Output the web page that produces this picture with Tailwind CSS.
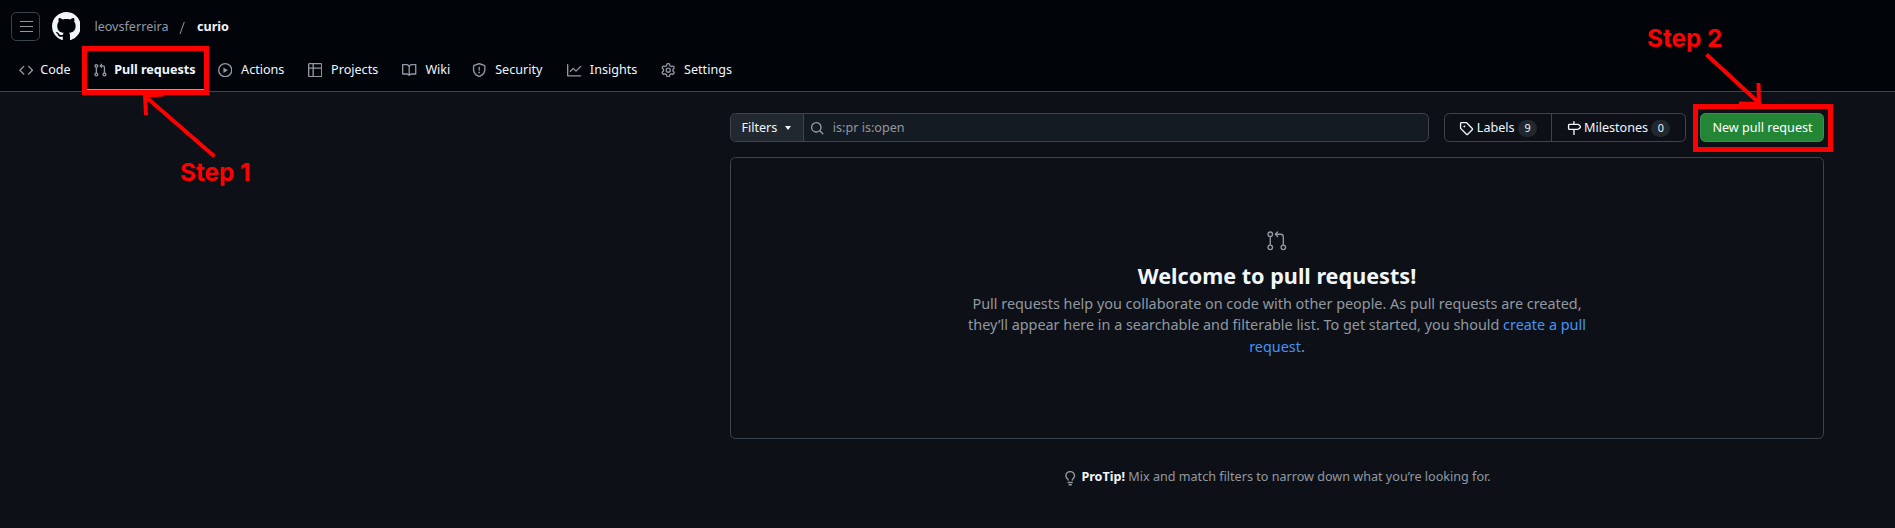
<!DOCTYPE html>
<html lang="en">
<head>
<meta charset="utf-8">
<title>Pull requests · leovsferreira/curio</title>
<script src="https://cdn.jsdelivr.net/npm/@tailwindcss/browser@4"></script>
</head>
<body class="relative h-[528px] w-[1895px] overflow-hidden bg-[#0d1117] font-['Noto_Sans',sans-serif] text-[12.6px] leading-[18.9px] text-[#f0f6fc]">
<svg class="hidden">
  <symbol id="pr" viewBox="0 0 16 16"><path d="M1.5 3.25a2.25 2.25 0 1 1 3 2.122v5.256a2.251 2.251 0 1 1-1.5 0V5.372A2.25 2.25 0 0 1 1.5 3.25Zm5.677-.177L9.573.677A.25.25 0 0 1 10 .854V2.5h1A2.5 2.5 0 0 1 13.500 5v5.628a2.251 2.251 0 1 1-1.5 0V5a1 1 0 0 0-1-1h-1v1.646a.25.25 0 0 1-.427.177L7.177 3.427a.25.25 0 0 1 0-.354ZM3.750 2.500a.75.75 0 1 0 0 1.500.75.75 0 0 0 0-1.500Zm0 9.500a.75.75 0 1 0 0 1.500.75.75 0 0 0 0-1.500Zm8.250.750a.75.75 0 1 0 1.500 0 .75.75 0 0 0-1.500 0Z"/></symbol>
</svg>

<header class="flex h-[92px] flex-col border-b border-[#3d444d] bg-[#010409]">
  <div class="flex h-[52px] items-center pt-[1px] pl-[11px]">
    <div class="flex size-[29px] flex-col items-start justify-center gap-[4px] rounded-[5.4px] border border-[#3d444d] pl-[8px]">
      <span class="h-px w-[13px] bg-[#9198a1]"></span>
      <span class="h-px w-[13px] bg-[#9198a1]"></span>
      <span class="h-px w-[13px] bg-[#9198a1]"></span>
    </div>
    <svg class="ml-[11.600px] size-[28.8px]" viewBox="0 0 16 16" fill="currentColor"><path d="M8 0c4.42 0 8 3.58 8 8a8.013 8.013 0 0 1-5.45 7.59c-.4.08-.55-.17-.55-.38 0-.27.01-1.13.01-2.2 0-.75-.25-1.23-.54-1.48 1.78-.2 3.65-.88 3.65-3.95 0-.88-.31-1.59-.82-2.15.08-.2.36-1.02-.08-2.12 0 0-.67-.22-2.2.82-.64-.18-1.32-.27-2-.27-.68 0-1.360.09-2 .27-1.530-1.030-2.200-.82-2.200-.82-.440 1.100-.160 1.920-.080 2.120-.510.560-.820 1.280-.820 2.150 0 3.060 1.860 3.750 3.640 3.950-.230.200-.440.550-.510 1.070-.460.210-1.610.550-2.330-.660-.150-.240-.600-.830-1.230-.820-.670.010-.270.380.010.530.340.190.730.900.820 1.130.160.450.680 1.310 2.690.940 0 .670.010 1.300.010 1.490 0 .210-.150.450-.550.380A7.995 7.995 0 0 1 0 8c0-4.420 3.580-8 8-8Z"/></svg>
    <nav class="mt-[2px] ml-[14px] flex items-center">
      <span class="text-[#9198a1]">leovsferreira</span>
      <svg class="mr-[12px] ml-[10.5px] h-[14px] w-[6px]" viewBox="0 0 6 14" fill="none" stroke="#9198a1"><path d="M5.300 1 1 13"/></svg>
      <span class="font-bold">curio</span>
    </nav>
  </div>
  <nav class="flex h-[36px] items-center pl-[19px] [&_svg]:size-[14.4px] [&_svg]:shrink-0 [&_svg]:fill-[#9198a1] [&>span]:flex [&>span]:shrink-0 [&>span]:items-center">
    <span class="w-[74px] gap-[6.8px]"><svg viewBox="0 0 16 16"><path d="m11.280 3.220 4.250 4.250a.75.75 0 0 1 0 1.060l-4.250 4.250a.749.749 0 0 1-1.275-.326.749.749 0 0 1 .215-.734L13.940 8l-3.720-3.720a.749.749 0 0 1 .326-1.275.749.749 0 0 1 .734.215Zm-6.560 0a.751.751 0 0 1 1.042.018.751.751 0 0 1 .018 1.042L2.060 8l3.720 3.720a.749.749 0 0 1-.326 1.275.749.749 0 0 1-.734-.215L.470 8.530a.75.75 0 0 1 0-1.060Z"/></svg>Code</span>
    <span class="w-[124.9px] gap-[6.8px] font-bold"><svg><use href="#pr"/></svg>Pull requests</span>
    <span class="w-[90px] gap-[8.8px]"><svg viewBox="0 0 16 16"><path d="M8 0a8 8 0 1 1 0 16A8 8 0 0 1 8 0ZM1.500 8a6.500 6.500 0 1 0 13 0 6.500 6.500 0 0 0-13 0Zm4.879-2.773 4.264 2.559a.25.25 0 0 1 0 .428l-4.264 2.559A.25.25 0 0 1 6 10.559V5.442a.25.25 0 0 1 .379-.215Z"/></svg>Actions</span>
    <span class="w-[94.3px] gap-[8.8px]"><svg viewBox="0 0 16 16"><path d="M0 1.750C0 .784.784 0 1.750 0h12.500C15.216 0 16 .784 16 1.750v12.500A1.750 1.750 0 0 1 14.250 16H1.750A1.750 1.750 0 0 1 0 14.250ZM6.500 6.500v8h7.750a.25.25 0 0 0 .25-.25V6.500Zm8-1.500V1.750a.25.25 0 0 0-.25-.25H6.500V5Zm-13 1.500v7.750c0 .138.112.250.250.250H5v-8ZM5 5V1.500H1.750a.25.25 0 0 0-.25.25V5Z"/></svg>Projects</span>
    <span class="w-[69.8px] gap-[8.8px]"><svg viewBox="0 0 16 16"><path d="M0 1.750A.75.75 0 0 1 .750 1h4.253c1.227 0 2.317.590 3 1.501A3.743 3.743 0 0 1 11.006 1h4.245a.75.75 0 0 1 .750.750v10.500a.75.75 0 0 1-.750.750h-4.507a2.250 2.250 0 0 0-1.591.659l-.622.621a.75.75 0 0 1-1.060 0l-.622-.621A2.250 2.250 0 0 0 5.258 13H.750a.75.75 0 0 1-.750-.750Zm7.251 10.324.004-5.073-.002-2.253A2.250 2.250 0 0 0 5.003 2.500H1.500v9h3.757a3.750 3.750 0 0 1 1.994.574ZM8.755 4.750l-.004 7.322a3.752 3.752 0 0 1 1.992-.572H14.500v-9h-3.495a2.250 2.250 0 0 0-2.250 2.250Z"/></svg>Wiki</span>
    <span class="w-[95.2px] gap-[8.8px]"><svg viewBox="0 0 16 16"><path d="M7.467.133a1.748 1.748 0 0 1 1.066 0l5.250 1.680A1.750 1.750 0 0 1 15 3.480V7c0 1.566-.320 3.182-1.303 4.682-.983 1.498-2.585 2.813-5.032 3.855a1.697 1.697 0 0 1-1.330 0c-2.447-1.042-4.049-2.357-5.032-3.855C1.320 10.182 1 8.566 1 7V3.480a1.750 1.750 0 0 1 1.217-1.667Zm.610 1.429a.25.25 0 0 0-.153 0l-5.250 1.680a.25.25 0 0 0-.174.238V7c0 1.358.275 2.666 1.057 3.860.784 1.194 2.121 2.340 4.366 3.297a.196.196 0 0 0 .154 0c2.245-.956 3.582-2.104 4.366-3.298C13.225 9.666 13.500 8.360 13.500 7V3.480a.251.251 0 0 0-.174-.237l-5.250-1.680ZM8.750 4.750v3a.75.75 0 0 1-1.500 0v-3a.75.75 0 0 1 1.500 0ZM9 10.500a1 1 0 1 1-2 0 1 1 0 0 1 2 0Z"/></svg>Security</span>
    <span class="w-[93.7px] gap-[8.3px]"><svg viewBox="0 0 16 16"><path d="M1.500 1.750V13.500h13.750a.75.75 0 0 1 0 1.500H.750a.75.75 0 0 1-.750-.750V1.750a.75.75 0 0 1 1.500 0Zm14.280 2.530-5.250 5.250a.75.75 0 0 1-1.060 0L7 7.060 4.280 9.780a.751.751 0 0 1-1.042-.018.751.751 0 0 1-.018-1.042l3.250-3.250a.75.75 0 0 1 1.060 0L10 7.940l4.720-4.720a.751.751 0 0 1 1.042.018.751.751 0 0 1 .018 1.042Z"/></svg>Insights</span>
    <span class="gap-[8.8px]"><svg viewBox="0 0 16 16"><path d="M8 0a8.200 8.200 0 0 1 .701.031C9.444.095 9.990.645 10.160 1.290l.288 1.107c.018.066.079.158.212.224.231.114.454.243.668.386.123.082.233.090.299.071l1.103-.303c.644-.176 1.392.021 1.820.630.270.385.506.792.704 1.218.315.675.111 1.422-.364 1.891l-.814.806c-.049.048-.098.147-.088.294.016.257.016.515 0 .772-.010.147.038.246.088.294l.814.806c.475.469.679 1.216.364 1.891a7.977 7.977 0 0 1-.704 1.217c-.428.610-1.176.807-1.820.630l-1.102-.302c-.067-.019-.177-.011-.300.071a5.909 5.909 0 0 1-.668.386c-.133.066-.194.158-.211.224l-.290 1.106c-.168.646-.715 1.196-1.458 1.260a8.006 8.006 0 0 1-1.402 0c-.743-.064-1.289-.614-1.458-1.260l-.289-1.106c-.018-.066-.079-.158-.212-.224a5.738 5.738 0 0 1-.668-.386c-.123-.082-.233-.090-.299-.071l-1.103.303c-.644.176-1.392-.021-1.820-.630a8.120 8.120 0 0 1-.704-1.218c-.315-.675-.111-1.422.363-1.891l.815-.806c.050-.048.098-.147.088-.294a6.214 6.214 0 0 1 0-.772c.010-.147-.038-.246-.088-.294l-.815-.806C.635 6.045.431 5.298.746 4.623a7.920 7.920 0 0 1 .704-1.217c.428-.610 1.176-.807 1.820-.630l1.102.302c.067.019.177.011.300-.071.214-.143.437-.272.668-.386.133-.066.194-.158.211-.224l.290-1.106C6.009.645 6.556.095 7.299.030 7.530.010 7.764 0 8 0Zm-.571 1.525c-.036.003-.108.036-.137.146l-.289 1.105c-.147.561-.549.967-.998 1.189-.173.086-.340.183-.500.290-.417.278-.970.423-1.529.270l-1.103-.303c-.109-.030-.175.016-.195.045-.220.312-.412.644-.573.990-.014.031-.021.110.059.190l.815.806c.411.406.562.957.530 1.456a4.709 4.709 0 0 0 0 .582c.032.499-.119 1.050-.530 1.456l-.815.806c-.081.080-.073.159-.059.190.162.346.353.677.573.989.020.030.085.076.195.046l1.102-.303c.560-.153 1.113-.008 1.530.270.161.107.328.204.501.290.447.222.850.629.997 1.189l.289 1.105c.029.109.101.143.137.146a6.600 6.600 0 0 0 1.142 0c.036-.003.108-.036.137-.146l.289-1.105c.147-.561.549-.967.998-1.189.173-.086.340-.183.500-.290.417-.278.970-.423 1.529-.270l1.103.303c.109.029.175-.016.195-.045.220-.313.411-.644.573-.990.014-.031.021-.110-.059-.190l-.815-.806c-.411-.406-.562-.957-.530-1.456a4.709 4.709 0 0 0 0-.582c-.032-.499.119-1.050.530-1.456l.815-.806c.081-.080.073-.159.059-.190a6.464 6.464 0 0 0-.573-.989c-.020-.030-.085-.076-.195-.046l-1.102.303c-.560.153-1.113.008-1.530-.270a4.440 4.440 0 0 0-.501-.290c-.447-.222-.850-.629-.997-1.189l-.289-1.105c-.029-.110-.101-.143-.137-.146a6.600 6.600 0 0 0-1.142 0ZM11 8a3 3 0 1 1-6 0 3 3 0 0 1 6 0ZM9.500 8a1.500 1.500 0 1 0-3.001.001A1.500 1.500 0 0 0 9.500 8Z"/></svg>Settings</span>
  </nav>
</header>

<main class="ml-[730px] flex w-[1094px] flex-col pt-[21px]">
  <div class="flex h-[29px] items-stretch">
    <div class="flex w-[699px] overflow-hidden rounded-[5.4px] border border-[#3d444d] bg-[#151b23]">
      <div class="flex w-[73px] items-center gap-[8px] border-r border-[#3d444d] bg-[#212830] pl-[10.4px]"><span class="pt-[1px]">Filters</span>
        <span class="mt-[1px] border-x-[3.6px] border-t-[4px] border-x-transparent border-t-[#f0f6fc]"></span>
      </div>
      <div class="flex items-center gap-[8.4px] pl-[6px] text-[#9198a1]">
        <svg class="mt-[1px] size-[14.4px]" viewBox="0 0 16 16" fill="currentColor"><path d="M10.680 11.740a6 6 0 0 1-7.922-8.982 6 6 0 0 1 8.982 7.922l3.040 3.040a.749.749 0 0 1-.326 1.275.749.749 0 0 1-.734-.215ZM11.500 7a4.499 4.499 0 1 0-8.997 0A4.499 4.499 0 0 0 11.500 7Z"/></svg>
        <span class="pt-[1px]">is:pr is:open</span>
      </div>
    </div>
    <div class="ml-[15px] flex w-[242px] rounded-[5.4px] border border-[#3d444d]">
      <div class="flex w-[107px] items-center border-r border-[#3d444d] pl-[14.4px]">
        <svg class="mt-[2px] mr-[3px] size-[14.4px]" viewBox="0 0 16 16" fill="currentColor"><path d="M1 7.775V2.750C1 1.784 1.784 1 2.750 1h5.025c.464 0 .910.184 1.238.513l6.250 6.250a1.750 1.750 0 0 1 0 2.474l-5.026 5.026a1.750 1.750 0 0 1-2.474 0l-6.250-6.250A1.752 1.752 0 0 1 1 7.775Zm1.500 0c0 .066.026.130.073.177l6.250 6.250a.25.25 0 0 0 .354 0l5.025-5.025a.25.25 0 0 0 0-.354l-6.250-6.250a.25.25 0 0 0-.177-.073H2.750a.25.25 0 0 0-.250.250ZM6 5a1 1 0 1 1 0 2 1 1 0 0 1 0-2Z"/></svg>
        <span class="pt-[1px]">Labels</span>
        <span class="mt-[1px] ml-[3.500px] flex h-[17px] w-[19px] items-center justify-center rounded-full bg-[#212830] text-[10.8px]">9</span>
      </div>
      <div class="flex items-center pl-[15px]">
        <svg class="mt-[1px] mr-[2.600px] size-[14.4px]" viewBox="0 0 16 16" fill="currentColor"><path d="M7.750 0a.75.75 0 0 1 .750.750V3h3.634c.414 0 .814.147 1.130.414l2.070 1.750a1.750 1.750 0 0 1 0 2.672l-2.070 1.750a1.750 1.750 0 0 1-1.130.414H8.500v5.250a.75.75 0 0 1-1.500 0V10H2.750A1.750 1.750 0 0 1 1 8.250v-3.500C1 3.784 1.784 3 2.750 3H7V.750A.75.75 0 0 1 7.750 0Zm4.384 8.500a.25.25 0 0 0 .161-.059l2.070-1.750a.248.248 0 0 0 0-.382l-2.070-1.750a.25.25 0 0 0-.161-.059H2.750a.25.25 0 0 0-.250.250v3.500c0 .138.112.250.250.250h9.384Z"/></svg>
        <span class="pt-[1px]">Milestones</span>
        <span class="mt-[1px] ml-[3.200px] flex h-[17px] w-[19px] items-center justify-center rounded-full bg-[#212830] text-[10.8px]">0</span>
      </div>
    </div>
    <div class="ml-[14px] flex w-[124px] items-center justify-center rounded-[5.4px] border border-[#39914a] bg-[#238636] pt-[1px] pl-[1px] text-white">New pull request</div>
  </div>

  <section class="mt-[15px] flex h-[282px] flex-col items-center rounded-[5.4px] border border-[#3d444d] pt-[72px] text-center">
    <svg class="size-[21.6px]" viewBox="0 0 24 24" fill="#9198a1"><path d="M16 19.250a3.250 3.250 0 1 1 6.500 0 3.250 3.250 0 0 1-6.500 0Zm-14.500 0a3.250 3.250 0 1 1 6.500 0 3.250 3.250 0 0 1-6.500 0Zm0-14.500a3.250 3.250 0 1 1 6.500 0 3.250 3.250 0 0 1-6.500 0ZM4.750 3a1.750 1.750 0 1 0 .001 3.501A1.750 1.750 0 0 0 4.750 3Zm0 14.500a1.750 1.750 0 1 0 .001 3.501A1.750 1.750 0 0 0 4.750 17.500Zm14.500 0a1.750 1.750 0 1 0 .001 3.501 1.750 1.750 0 0 0-.001-3.501Z"/><path d="M13.405 1.720a.75.75 0 0 1 0 1.060L12.185 4h4.065A3.750 3.750 0 0 1 20 7.750v8.750a.75.75 0 0 1-1.500 0V7.750a2.250 2.250 0 0 0-2.250-2.250h-4.064l1.220 1.220a.75.75 0 0 1-1.061 1.060l-2.500-2.500a.75.75 0 0 1 0-1.060l2.500-2.500a.75.75 0 0 1 1.060 0ZM4.750 7.250A.75.75 0 0 1 5.500 8v8A.75.75 0 0 1 4 16V8a.75.75 0 0 1 .750-.750Z"/></svg>
    <h1 class="mt-[8px] text-[21.6px] leading-[32.4px] font-bold">Welcome to pull requests!</h1>
    <p class="mt-[0.6px] w-[630px] text-[14.4px] leading-[21.6px] text-[#9198a1]">Pull requests help you collaborate on code with other people. As pull requests are created, they’ll appear here in a searchable and filterable list. To get started, you should <a class="text-[#4493f8]">create a pull request</a>.</p>
  </section>

  <div class="mt-[29px] flex items-center justify-center text-[#9198a1]">
    <svg class="mt-[2px] mr-[3.600px] size-[14.4px]" viewBox="0 0 16 16" fill="currentColor"><path d="M8 1.500c-2.363 0-4 1.690-4 3.750 0 .984.424 1.625.984 2.304l.214.253c.223.264.470.556.673.848.284.411.537.896.621 1.490a.75.75 0 0 1-1.484.211c-.040-.282-.163-.547-.370-.847a8.456 8.456 0 0 0-.542-.680c-.084-.100-.173-.205-.268-.320C3.201 7.750 2.500 6.766 2.500 5.250 2.500 2.310 4.863 0 8 0s5.500 2.310 5.500 5.250c0 1.516-.701 2.500-1.328 3.259-.095.115-.184.220-.268.319-.207.245-.383.453-.541.681-.208.300-.330.565-.370.847a.751.751 0 0 1-1.485-.212c.084-.593.337-1.078.621-1.489.203-.292.450-.584.673-.848.075-.088.147-.173.213-.253.561-.679.985-1.320.985-2.304 0-2.060-1.637-3.750-4-3.750ZM5.750 12h4.500a.75.75 0 0 1 0 1.500h-4.500a.75.75 0 0 1 0-1.500ZM6 15.250a.75.75 0 0 1 .750-.750h2.500a.75.75 0 0 1 0 1.500h-2.500a.75.75 0 0 1-.750-.750Z"/></svg>
    <p><strong class="font-bold text-[#f0f6fc]">ProTip!</strong> Mix and match filters to narrow down what you’re looking for.</p>
  </div>
</main>

<div class="absolute top-[89px] left-[87px] h-px w-[117px] bg-[#f78166]"></div>
<div class="absolute top-[46px] left-[82px] h-[49px] w-[127px] border-5 border-[#ff0000]"></div>
<div class="absolute top-[104px] left-[1693px] h-[48px] w-[140px] border-5 border-[#ff0000]"></div>
<svg class="absolute inset-0 h-[528px] w-[1895px]" viewBox="0 0 1895 528" fill="none" stroke="#f00" stroke-width="4">
  <path d="M214.500 156.500 146 97M146 115 145 95.500 164 94.500"/>
  <path d="M1706.500 54.500 1759 103M1758.500 83 1759 104 1739 103.500"/>
</svg>
<div class="absolute top-[156px] left-[180px] font-['Inter',sans-serif] text-[24.3px] leading-[32px] font-bold whitespace-nowrap text-[#ff0000]">Step 1</div>
<div class="absolute top-[22px] left-[1647px] font-['Inter',sans-serif] text-[24.3px] leading-[32px] font-bold whitespace-nowrap text-[#ff0000]">Step 2</div>
</body>
</html>
